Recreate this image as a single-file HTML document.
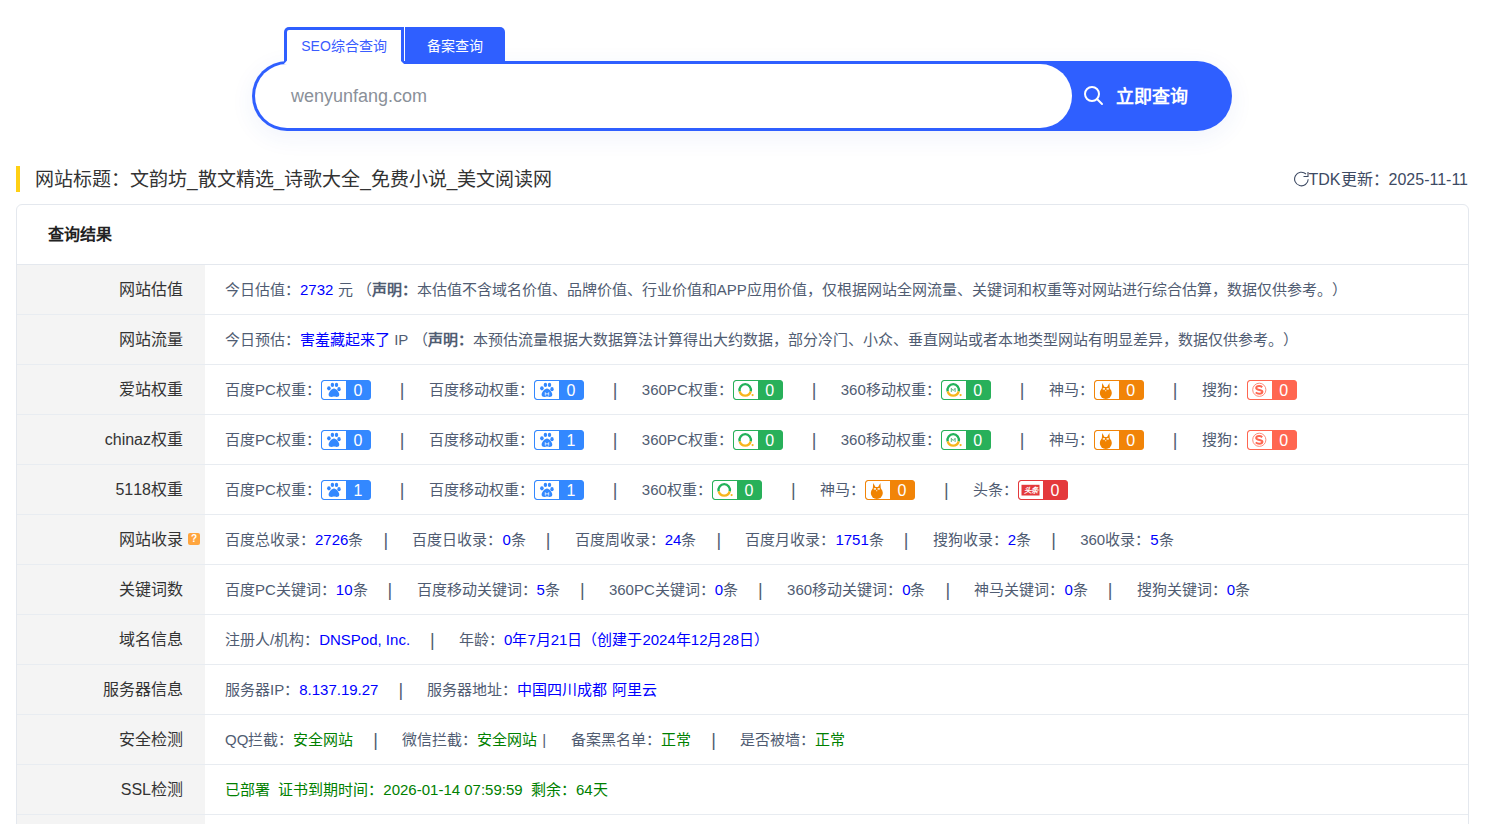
<!DOCTYPE html>
<html lang="zh-CN"><head><meta charset="utf-8">
<style>
*{box-sizing:border-box}
html,body{margin:0;padding:0;background:#fff;width:1505px;height:824px;overflow:hidden}
body{font-family:"Liberation Sans",sans-serif;color:#333;position:relative;text-spacing-trim:space-all;font-kerning:none}
.abs{position:absolute}
/* search */
.tab1{position:absolute;left:284px;top:27px;width:120px;height:37px;background:#fff;border:3px solid #2f5fff;border-bottom:none;border-radius:5px 0 0 0;z-index:3;font-size:14px;color:#3a5cff;text-align:center;line-height:32px;padding-left:0}
.tab2{position:absolute;left:405px;top:27px;width:100px;height:35px;background:#2f5fff;border-radius:0 5px 0 0;z-index:2;font-size:14px;font-weight:500;color:#fff;text-align:center;line-height:38px}
.sbox{position:absolute;left:252px;top:61px;width:980px;height:70px;border-radius:35px;background:#2f5fff;box-shadow:0 6px 24px rgba(40,80,200,0.07)}
.sinput{position:absolute;left:3px;top:3px;width:817px;height:64px;background:#fff;border-radius:32px;font-size:18px;color:#8a9099;line-height:64px;padding-left:36px}
.sbtn{position:absolute;left:864px;top:23px;color:#fff;font-size:18px;font-weight:bold;line-height:26px}
/* title */
.ybar{position:absolute;left:16px;top:166px;width:4px;height:26px;background:#ffd014}
.title{position:absolute;left:35px;top:167px;font-size:19px;line-height:26px;color:#333}
.tdk{position:absolute;right:37px;top:167px;font-size:16px;line-height:26px;color:#3d4a63;font-kerning:normal;text-spacing-trim:normal}
/* card */
.card{position:absolute;left:16px;top:204px;width:1453px;height:700px;border:1px solid #e4e8ee;border-radius:6px;overflow:hidden}
.hd{height:60px;border-bottom:1px solid #e4e8ee;font-size:16px;font-weight:bold;color:#222;padding-left:31px;line-height:59px}
.row{height:50px;border-bottom:1px solid #e8ecf1;position:relative}
.lab{position:absolute;left:0;top:0;width:188px;height:49px;background:#f4f4f4;text-align:right;padding-right:22px;font-size:16px;line-height:49px;color:#333}
.val{position:absolute;left:208px;top:0;height:49px;line-height:49px;font-size:15px;color:#505c72;white-space:nowrap}
.b{color:#0000ff}
.g{color:#008000}

.bg{display:inline-block;vertical-align:top;margin-top:15px;width:50px;height:20px;border:1px solid var(--c);border-radius:3px;position:relative;margin-right:9px;background:var(--c);overflow:hidden}
.bg i{position:absolute;left:0;top:0;width:24px;height:18px;background:#fff;border-radius:2px 0 0 2px}
.bg i svg{position:absolute;left:0;top:0}
.bg em{position:absolute;left:24px;top:0;width:24px;height:18px;color:#fff;font-style:normal;text-align:center;font-size:16px;line-height:19px}
.bd,.bdm{--c:#3388ff}.s360,.s360m{--c:#28b05a}.sm{--c:#f18408}.sg{--c:#ff6650}.tt{--c:#e4393c}
.sep{display:inline-block;width:49px;padding-left:20px;color:#505c72;font-size:18px;position:relative;top:1px}
.sep3{display:inline-block;width:34px;padding-left:5px}
.q{position:absolute;left:171px;top:18px;width:12px;height:12px;background:#ffa53e;border-radius:2px;color:#fff;font-size:10px;line-height:12px;text-align:center;font-weight:bold;padding:0}
</style></head><body>
<div class="tab1">SEO综合查询</div>
<div class="tab2">备案查询</div>
<svg style="position:absolute;left:280px;top:56px;z-index:5" width="130" height="10" viewBox="0 0 130 10"><polygon points="7,4.4 7.2,8 3.9,8" fill="#fff"/><polygon points="121,4.9 121,8 124.1,8" fill="#fff"/></svg>
<div class="sbox"><div class="sinput">wenyunfang.com</div>
<svg class="abs" style="left:831px;top:24px" width="22" height="22" viewBox="0 0 22 22"><circle cx="9" cy="9" r="7" fill="none" stroke="#fff" stroke-width="2"/><line x1="14" y1="14" x2="19" y2="19" stroke="#fff" stroke-width="2" stroke-linecap="round"/></svg>
<div class="sbtn">立即查询</div></div>

<div class="ybar"></div>
<div class="title">网站标题：文韵坊_散文精选_诗歌大全_免费小说_美文阅读网</div>
<div class="tdk"><svg style="position:absolute;left:-15px;top:4px" width="16" height="16" viewBox="0 0 16 16"><path d="M12 3A6.8 6.8 0 1 0 14.2 8.2" fill="none" stroke="#3d4a63" stroke-width="1.1"/><path d="M9.5 5.5H14V1" fill="none" stroke="#3d4a63" stroke-width="1.1"/></svg>TDK更新：2025-11-11</div>

<div class="card">
<div class="hd">查询结果</div>
<div class="row"><div class="lab">网站估值</div><div class="val">今日估值：<span class="b">2732</span> 元 （<b>声明：</b>本估值不含域名价值、品牌价值、行业价值和APP应用价值，仅根据网站全网流量、关键词和权重等对网站进行综合估算，数据仅供参考。）</div></div>
<div class="row"><div class="lab">网站流量</div><div class="val">今日预估：<span class="b">害羞藏起来了</span> IP （<b>声明：</b>本预估流量根据大数据算法计算得出大约数据，部分冷门、小众、垂直网站或者本地类型网站有明显差异，数据仅供参考。）</div></div>
<div class="row"><div class="lab">爱站权重</div><div class="val">百度PC权重：<span class="bg bd"><i><svg width="24" height="18" viewBox="0 0 24 18"><g fill="#3388ff"><ellipse cx="6.9" cy="7.3" rx="1.8" ry="2.1"/><ellipse cx="10.4" cy="3.9" rx="1.7" ry="2.1"/><ellipse cx="14.5" cy="3.9" rx="1.7" ry="2.1"/><ellipse cx="17" cy="8.2" rx="1.7" ry="2.1"/><path d="M12 7.6C9.6 7.6 6.6 11.5 6.6 13.6C6.6 15.4 8 16 9.5 16C10.6 16 11.2 15.6 12 15.6C12.8 15.6 13.4 16 14.5 16C16 16 17.3 15.4 17.3 13.6C17.3 11.5 14.4 7.6 12 7.6Z"/></g></svg></i><em>0</em></span><span class="sep bsep">|</span>百度移动权重：<span class="bg bdm"><i><svg width="24" height="18" viewBox="0 0 24 18"><g fill="#3388ff"><ellipse cx="6.9" cy="7.3" rx="1.8" ry="2.1"/><ellipse cx="10.4" cy="3.9" rx="1.7" ry="2.1"/><ellipse cx="14.5" cy="3.9" rx="1.7" ry="2.1"/><ellipse cx="17" cy="8.2" rx="1.7" ry="2.1"/><path d="M12 7.6C9.6 7.6 6.6 11.5 6.6 13.6C6.6 15.4 8 16 9.5 16C10.6 16 11.2 15.6 12 15.6C12.8 15.6 13.4 16 14.5 16C16 16 17.3 15.4 17.3 13.6C17.3 11.5 14.4 7.6 12 7.6Z"/></g><path d="M10.3 14.6V11.6L12 13.4L13.7 11.6V14.6" fill="none" stroke="#fff" stroke-width="0.8"/></svg></i><em>0</em></span><span class="sep bsep">|</span>360PC权重：<span class="bg s360"><i><svg width="24" height="18" viewBox="0 0 24 18"><path d="M5.69 10.38A5.7 5.7 0 1 1 16.71 10.38" fill="none" stroke="#22b35a" stroke-width="2.3"/><path d="M16.71 10.38A5.7 5.7 0 0 1 5.69 10.38" fill="none" stroke="#f8b51c" stroke-width="2.3"/><circle cx="18.6" cy="14.1" r="1.1" fill="#f8b51c"/></svg></i><em>0</em></span><span class="sep bsep">|</span>360移动权重：<span class="bg s360m"><i><svg width="24" height="18" viewBox="0 0 24 18"><path d="M5.69 10.38A5.7 5.7 0 1 1 16.71 10.38" fill="none" stroke="#22b35a" stroke-width="2.3"/><path d="M16.71 10.38A5.7 5.7 0 0 1 5.69 10.38" fill="none" stroke="#f8b51c" stroke-width="2.3"/><circle cx="18.6" cy="14.1" r="1.1" fill="#f8b51c"/><path d="M9.3 11V7.3L11.2 9.6L13.1 7.3V11" fill="none" stroke="#4caf70" stroke-width="0.9"/></svg></i><em>0</em></span><span class="sep bsep">|</span>神马：<span class="bg sm"><i><svg width="24" height="18" viewBox="0 0 24 18"><g fill="#f08300"><circle cx="10.8" cy="12" r="6"/><path d="M6.6 10.5L7.2 2L9.5 6H12.1L14.4 2L15 10.5Z"/></g><g fill="#fff"><rect x="7.8" y="7.2" width="2.2" height="1.4"/><rect x="11.6" y="7.2" width="2.2" height="1.4"/><rect x="10.4" y="9" width="0.8" height="1.3"/></g></svg></i><em>0</em></span><span class="sep bsep">|</span>搜狗：<span class="bg sg"><i><svg width="24" height="18" viewBox="0 0 24 18"><circle cx="11.3" cy="8.8" r="6.6" fill="none" stroke="#ff8a78" stroke-width="1"/><path d="M14.2 6.2C13.4 5.4 12.4 5.1 11.2 5.1C9.4 5.1 8.2 5.9 8.2 7.1C8.2 9.6 14.4 8.4 14.4 10.7C14.4 12 13 12.7 11.2 12.7C9.8 12.7 8.6 12.2 7.8 11.4" fill="none" stroke="#ff6650" stroke-width="2"/></svg></i><em>0</em></span></div></div>
<div class="row"><div class="lab">chinaz权重</div><div class="val">百度PC权重：<span class="bg bd"><i><svg width="24" height="18" viewBox="0 0 24 18"><g fill="#3388ff"><ellipse cx="6.9" cy="7.3" rx="1.8" ry="2.1"/><ellipse cx="10.4" cy="3.9" rx="1.7" ry="2.1"/><ellipse cx="14.5" cy="3.9" rx="1.7" ry="2.1"/><ellipse cx="17" cy="8.2" rx="1.7" ry="2.1"/><path d="M12 7.6C9.6 7.6 6.6 11.5 6.6 13.6C6.6 15.4 8 16 9.5 16C10.6 16 11.2 15.6 12 15.6C12.8 15.6 13.4 16 14.5 16C16 16 17.3 15.4 17.3 13.6C17.3 11.5 14.4 7.6 12 7.6Z"/></g></svg></i><em>0</em></span><span class="sep bsep">|</span>百度移动权重：<span class="bg bdm"><i><svg width="24" height="18" viewBox="0 0 24 18"><g fill="#3388ff"><ellipse cx="6.9" cy="7.3" rx="1.8" ry="2.1"/><ellipse cx="10.4" cy="3.9" rx="1.7" ry="2.1"/><ellipse cx="14.5" cy="3.9" rx="1.7" ry="2.1"/><ellipse cx="17" cy="8.2" rx="1.7" ry="2.1"/><path d="M12 7.6C9.6 7.6 6.6 11.5 6.6 13.6C6.6 15.4 8 16 9.5 16C10.6 16 11.2 15.6 12 15.6C12.8 15.6 13.4 16 14.5 16C16 16 17.3 15.4 17.3 13.6C17.3 11.5 14.4 7.6 12 7.6Z"/></g><path d="M10.3 14.6V11.6L12 13.4L13.7 11.6V14.6" fill="none" stroke="#fff" stroke-width="0.8"/></svg></i><em>1</em></span><span class="sep bsep">|</span>360PC权重：<span class="bg s360"><i><svg width="24" height="18" viewBox="0 0 24 18"><path d="M5.69 10.38A5.7 5.7 0 1 1 16.71 10.38" fill="none" stroke="#22b35a" stroke-width="2.3"/><path d="M16.71 10.38A5.7 5.7 0 0 1 5.69 10.38" fill="none" stroke="#f8b51c" stroke-width="2.3"/><circle cx="18.6" cy="14.1" r="1.1" fill="#f8b51c"/></svg></i><em>0</em></span><span class="sep bsep">|</span>360移动权重：<span class="bg s360m"><i><svg width="24" height="18" viewBox="0 0 24 18"><path d="M5.69 10.38A5.7 5.7 0 1 1 16.71 10.38" fill="none" stroke="#22b35a" stroke-width="2.3"/><path d="M16.71 10.38A5.7 5.7 0 0 1 5.69 10.38" fill="none" stroke="#f8b51c" stroke-width="2.3"/><circle cx="18.6" cy="14.1" r="1.1" fill="#f8b51c"/><path d="M9.3 11V7.3L11.2 9.6L13.1 7.3V11" fill="none" stroke="#4caf70" stroke-width="0.9"/></svg></i><em>0</em></span><span class="sep bsep">|</span>神马：<span class="bg sm"><i><svg width="24" height="18" viewBox="0 0 24 18"><g fill="#f08300"><circle cx="10.8" cy="12" r="6"/><path d="M6.6 10.5L7.2 2L9.5 6H12.1L14.4 2L15 10.5Z"/></g><g fill="#fff"><rect x="7.8" y="7.2" width="2.2" height="1.4"/><rect x="11.6" y="7.2" width="2.2" height="1.4"/><rect x="10.4" y="9" width="0.8" height="1.3"/></g></svg></i><em>0</em></span><span class="sep bsep">|</span>搜狗：<span class="bg sg"><i><svg width="24" height="18" viewBox="0 0 24 18"><circle cx="11.3" cy="8.8" r="6.6" fill="none" stroke="#ff8a78" stroke-width="1"/><path d="M14.2 6.2C13.4 5.4 12.4 5.1 11.2 5.1C9.4 5.1 8.2 5.9 8.2 7.1C8.2 9.6 14.4 8.4 14.4 10.7C14.4 12 13 12.7 11.2 12.7C9.8 12.7 8.6 12.2 7.8 11.4" fill="none" stroke="#ff6650" stroke-width="2"/></svg></i><em>0</em></span></div></div>
<div class="row"><div class="lab">5118权重</div><div class="val">百度PC权重：<span class="bg bd"><i><svg width="24" height="18" viewBox="0 0 24 18"><g fill="#3388ff"><ellipse cx="6.9" cy="7.3" rx="1.8" ry="2.1"/><ellipse cx="10.4" cy="3.9" rx="1.7" ry="2.1"/><ellipse cx="14.5" cy="3.9" rx="1.7" ry="2.1"/><ellipse cx="17" cy="8.2" rx="1.7" ry="2.1"/><path d="M12 7.6C9.6 7.6 6.6 11.5 6.6 13.6C6.6 15.4 8 16 9.5 16C10.6 16 11.2 15.6 12 15.6C12.8 15.6 13.4 16 14.5 16C16 16 17.3 15.4 17.3 13.6C17.3 11.5 14.4 7.6 12 7.6Z"/></g></svg></i><em>1</em></span><span class="sep bsep">|</span>百度移动权重：<span class="bg bdm"><i><svg width="24" height="18" viewBox="0 0 24 18"><g fill="#3388ff"><ellipse cx="6.9" cy="7.3" rx="1.8" ry="2.1"/><ellipse cx="10.4" cy="3.9" rx="1.7" ry="2.1"/><ellipse cx="14.5" cy="3.9" rx="1.7" ry="2.1"/><ellipse cx="17" cy="8.2" rx="1.7" ry="2.1"/><path d="M12 7.6C9.6 7.6 6.6 11.5 6.6 13.6C6.6 15.4 8 16 9.5 16C10.6 16 11.2 15.6 12 15.6C12.8 15.6 13.4 16 14.5 16C16 16 17.3 15.4 17.3 13.6C17.3 11.5 14.4 7.6 12 7.6Z"/></g><path d="M10.3 14.6V11.6L12 13.4L13.7 11.6V14.6" fill="none" stroke="#fff" stroke-width="0.8"/></svg></i><em>1</em></span><span class="sep bsep">|</span>360权重：<span class="bg s360"><i><svg width="24" height="18" viewBox="0 0 24 18"><path d="M5.69 10.38A5.7 5.7 0 1 1 16.71 10.38" fill="none" stroke="#22b35a" stroke-width="2.3"/><path d="M16.71 10.38A5.7 5.7 0 0 1 5.69 10.38" fill="none" stroke="#f8b51c" stroke-width="2.3"/><circle cx="18.6" cy="14.1" r="1.1" fill="#f8b51c"/></svg></i><em>0</em></span><span class="sep bsep">|</span>神马：<span class="bg sm"><i><svg width="24" height="18" viewBox="0 0 24 18"><g fill="#f08300"><circle cx="10.8" cy="12" r="6"/><path d="M6.6 10.5L7.2 2L9.5 6H12.1L14.4 2L15 10.5Z"/></g><g fill="#fff"><rect x="7.8" y="7.2" width="2.2" height="1.4"/><rect x="11.6" y="7.2" width="2.2" height="1.4"/><rect x="10.4" y="9" width="0.8" height="1.3"/></g></svg></i><em>0</em></span><span class="sep bsep">|</span>头条：<span class="bg tt"><i><svg width="24" height="18" viewBox="0 0 24 18"><rect x="2.5" y="3.8" width="18" height="10.7" fill="#e4393c"/><text x="11.5" y="12.3" font-size="7.5" fill="#fff" text-anchor="middle" font-family="Liberation Sans" font-weight="bold">头条</text></svg></i><em>0</em></span></div></div>
<div class="row"><div class="lab">网站收录<span class="q">?</span></div><div class="val">百度总收录：<span class="b">2726</span>条<span class="sep">|</span>百度日收录：<span class="b">0</span>条<span class="sep">|</span>百度周收录：<span class="b">24</span>条<span class="sep">|</span>百度月收录：<span class="b">1751</span>条<span class="sep">|</span>搜狗收录：<span class="b">2</span>条<span class="sep">|</span>360收录：<span class="b">5</span>条</div></div>
<div class="row"><div class="lab">关键词数</div><div class="val">百度PC关键词：<span class="b">10</span>条<span class="sep">|</span>百度移动关键词：<span class="b">5</span>条<span class="sep">|</span>360PC关键词：<span class="b">0</span>条<span class="sep">|</span>360移动关键词：<span class="b">0</span>条<span class="sep">|</span>神马关键词：<span class="b">0</span>条<span class="sep">|</span>搜狗关键词：<span class="b">0</span>条</div></div>
<div class="row"><div class="lab">域名信息</div><div class="val">注册人/机构：<span class="b">DNSPod, Inc.</span><span class="sep">|</span>年龄：<span class="b">0年7月21日（创建于2024年12月28日）</span></div></div>
<div class="row"><div class="lab">服务器信息</div><div class="val">服务器IP：<span class="b">8.137.19.27</span><span class="sep">|</span>服务器地址：<span class="b">中国四川成都 阿里云</span></div></div>
<div class="row"><div class="lab">安全检测</div><div class="val">QQ拦截：<span class="g">安全网站</span><span class="sep">|</span>微信拦截：<span class="g">安全网站</span><span class="sep3">|</span>备案黑名单：<span class="g">正常</span><span class="sep">|</span>是否被墙：<span class="g">正常</span></div></div>
<div class="row"><div class="lab">SSL检测</div><div class="val g">已部署&nbsp;&nbsp;证书到期时间：2026-01-14 07:59:59&nbsp;&nbsp;剩余：64天</div></div>
<div class="row"><div class="lab"></div><div class="val"></div></div>
</div>
</body></html>
